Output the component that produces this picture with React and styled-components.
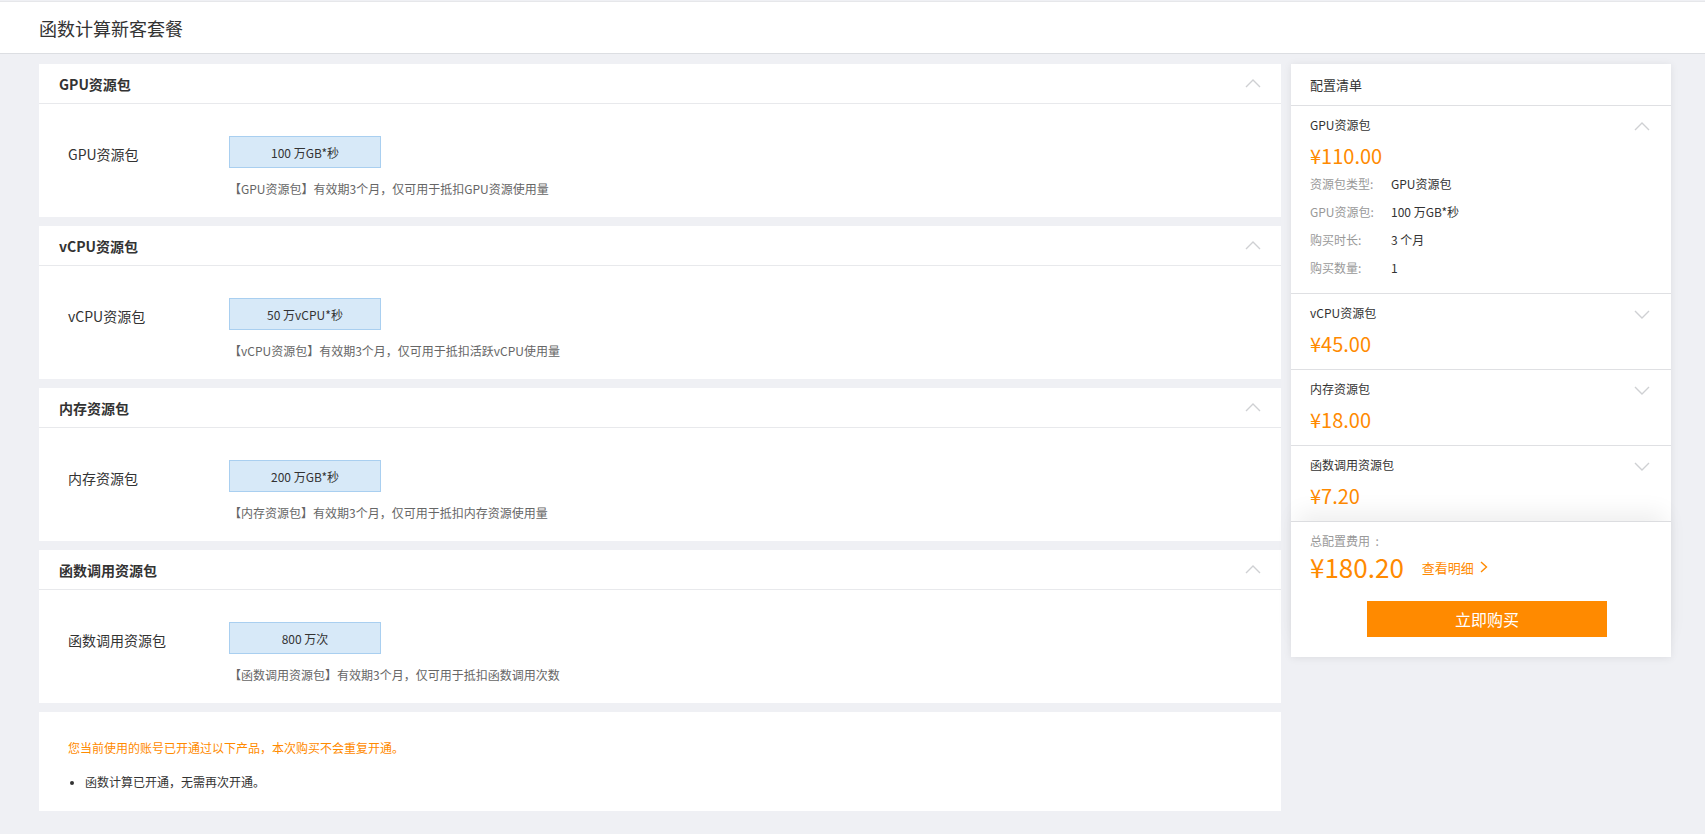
import React from 'react'
import styled, { createGlobalStyle } from 'styled-components'

const GlobalStyle = createGlobalStyle`
  html, body {
    margin: 0;
    padding: 0;
    background: #eff0f4;
    font-family: "Noto Sans CJK SC", "Noto Sans", sans-serif;
    color: #333;
  }
  #root {
    min-height: 100vh;
  }
`

const Header = styled.div`
  margin-top: 1px;
  height: 51px;
  border-top: 1px solid #e6e7ea;
  border-bottom: 1px solid #dcdee2;
  background: #fff;
  display: flex;
  align-items: center;
  padding-left: 39px;
  font-size: 18px;
  color: #333;
`

const Main = styled.div`
  display: flex;
  align-items: flex-start;
  gap: 10px;
  padding: 10px 34px 0 39px;
`

const LeftColumn = styled.div`
  flex: 1;
  display: flex;
  flex-direction: column;
  gap: 9px;
`

const Card = styled.div`
  background: #fff;
`

const CardHeader = styled.div`
  height: 39px;
  border-bottom: 1px solid #e8e9ec;
  display: flex;
  align-items: center;
  justify-content: space-between;
  padding: 0 20px 0 20px;
  font-size: 14px;
  font-weight: 700;
  color: #333;
`

const CardBody = styled.div`
  display: flex;
  padding: 32px 30px 19px 29px;
`

const FieldLabel = styled.div`
  width: 161px;
  padding-top: 2px;
  line-height: 32px;
  font-size: 14px;
  color: #333;
`

const FieldControl = styled.div`
  display: flex;
  flex-direction: column;
  align-items: flex-start;
`

const OptionButton = styled.div`
  box-sizing: border-box;
  width: 152px;
  height: 32px;
  border: 1px solid #a9cff0;
  background: #d7e9f8;
  display: flex;
  align-items: center;
  justify-content: center;
  font-size: 12px;
  color: #333;
`

const Hint = styled.div`
  margin-top: 12px;
  line-height: 18px;
  font-size: 12px;
  color: #666;
`

const Notice = styled.div`
  background: #fff;
  padding: 27px 30px 20px 29px;
  height: 52px;
`

const NoticeText = styled.div`
  font-size: 12px;
  line-height: 18px;
  color: #ff8a00;
`

const NoticeList = styled.ul`
  margin: 16px 0 0;
  padding-left: 17px;
  font-size: 12px;
  line-height: 18px;
  color: #333;

  li::marker {
    font-size: 10px;
  }
`

const Panel = styled.div`
  width: 380px;
  background: #fff;
  box-shadow: 0 1px 8px rgba(0, 0, 0, 0.08);
`

const PanelHeader = styled.div`
  height: 41px;
  border-bottom: 1px solid #dfe0e3;
  display: flex;
  align-items: center;
  padding-left: 19px;
  font-size: 13px;
  color: #333;
`

const Section = styled.div`
  position: relative;
  padding: 10px 20px 11px 19px;
  border-bottom: ${p => (p.last ? 'none' : '1px solid #dfe0e3')};
`

const SectionTitle = styled.div`
  font-size: 12px;
  line-height: 18px;
  color: #333;
`

const Price = styled.div`
  margin-top: 8px;
  font-size: 20px;
  line-height: 28px;
  color: #ff8a00;
`

const Toggle = styled.div`
  position: absolute;
  right: 21px;
  top: 16px;
  display: flex;
`

const DetailRow = styled.div`
  display: flex;
  line-height: 28px;
  font-size: 12px;
`

const DetailLabel = styled.span`
  width: 81px;
  color: #999;
`

const DetailValue = styled.span`
  color: #333;
`

const Footer = styled.div`
  position: relative;
  border-top: 1px solid #dcdde0;
  padding: 10px 19px 20px;
  box-shadow: 0 -14px 22px -6px rgba(0, 0, 0, 0.07);
  background: #fff;
`

const TotalLabel = styled.div`
  font-size: 12px;
  line-height: 18px;
  color: #999;
`

const TotalRow = styled.div`
  display: flex;
  align-items: center;
  gap: 18px;
  height: 32px;
`

const TotalPrice = styled.div`
  font-size: 26px;
  color: #ff8a00;
`

const DetailLink = styled.div`
  display: flex;
  align-items: center;
  gap: 6px;
  font-size: 13px;
  color: #ff8a00;
  padding-top: 2px;
`

const BuyButton = styled.div`
  margin: 19px 0 0 57px;
  width: 240px;
  height: 36px;
  background: #ff8a00;
  color: #fff;
  font-size: 16px;
  display: flex;
  align-items: center;
  justify-content: center;
`

const Chevron = ({ up }) => (
  <svg width="16" height="9" viewBox="0 0 16 9">
    <polyline
      points={up ? '1,8 8,1 15,8' : '1,1 8,8 15,1'}
      fill="none"
      stroke="#cfd0d3"
      strokeWidth="1.4"
    />
  </svg>
)

const packs = [
  { name: 'GPU资源包', value: '100 万GB*秒', hint: '【GPU资源包】有效期3个月，仅可用于抵扣GPU资源使用量' },
  { name: 'vCPU资源包', value: '50 万vCPU*秒', hint: '【vCPU资源包】有效期3个月，仅可用于抵扣活跃vCPU使用量' },
  { name: '内存资源包', value: '200 万GB*秒', hint: '【内存资源包】有效期3个月，仅可用于抵扣内存资源使用量' },
  { name: '函数调用资源包', value: '800 万次', hint: '【函数调用资源包】有效期3个月，仅可用于抵扣函数调用次数' },
]

const orders = [
  {
    name: 'GPU资源包',
    price: '¥110.00',
    open: true,
    details: [
      ['资源包类型:', 'GPU资源包'],
      ['GPU资源包:', '100 万GB*秒'],
      ['购买时长:', '3 个月'],
      ['购买数量:', '1'],
    ],
  },
  { name: 'vCPU资源包', price: '¥45.00' },
  { name: '内存资源包', price: '¥18.00' },
  { name: '函数调用资源包', price: '¥7.20' },
]

export default function App() {
  return (
    <>
      <GlobalStyle />
      <Header>函数计算新客套餐</Header>
      <Main>
        <LeftColumn>
          {packs.map(p => (
            <Card key={p.name}>
              <CardHeader>
                {p.name}
                <Chevron up />
              </CardHeader>
              <CardBody>
                <FieldLabel>{p.name}</FieldLabel>
                <FieldControl>
                  <OptionButton>{p.value}</OptionButton>
                  <Hint>{p.hint}</Hint>
                </FieldControl>
              </CardBody>
            </Card>
          ))}
          <Notice>
            <NoticeText>您当前使用的账号已开通过以下产品，本次购买不会重复开通。</NoticeText>
            <NoticeList>
              <li>函数计算已开通，无需再次开通。</li>
            </NoticeList>
          </Notice>
        </LeftColumn>
        <Panel>
          <PanelHeader>配置清单</PanelHeader>
          {orders.map((o, i) => (
            <Section key={o.name} last={i === orders.length - 1}>
              <SectionTitle>{o.name}</SectionTitle>
              <Toggle>
                <Chevron up={o.open} />
              </Toggle>
              <Price>{o.price}</Price>
              {o.details &&
                o.details.map(([k, v]) => (
                  <DetailRow key={k}>
                    <DetailLabel>{k}</DetailLabel>
                    <DetailValue>{v}</DetailValue>
                  </DetailRow>
                ))}
            </Section>
          ))}
          <Footer>
            <TotalLabel>总配置费用 &nbsp;:</TotalLabel>
            <TotalRow>
              <TotalPrice>¥180.20</TotalPrice>
              <DetailLink>
                查看明细
                <svg width="8" height="12" viewBox="0 0 8 12">
                  <polyline points="1,1 6.5,6 1,11" fill="none" stroke="#ff8a00" strokeWidth="1.4" />
                </svg>
              </DetailLink>
            </TotalRow>
            <BuyButton>立即购买</BuyButton>
          </Footer>
        </Panel>
      </Main>
    </>
  )
}
